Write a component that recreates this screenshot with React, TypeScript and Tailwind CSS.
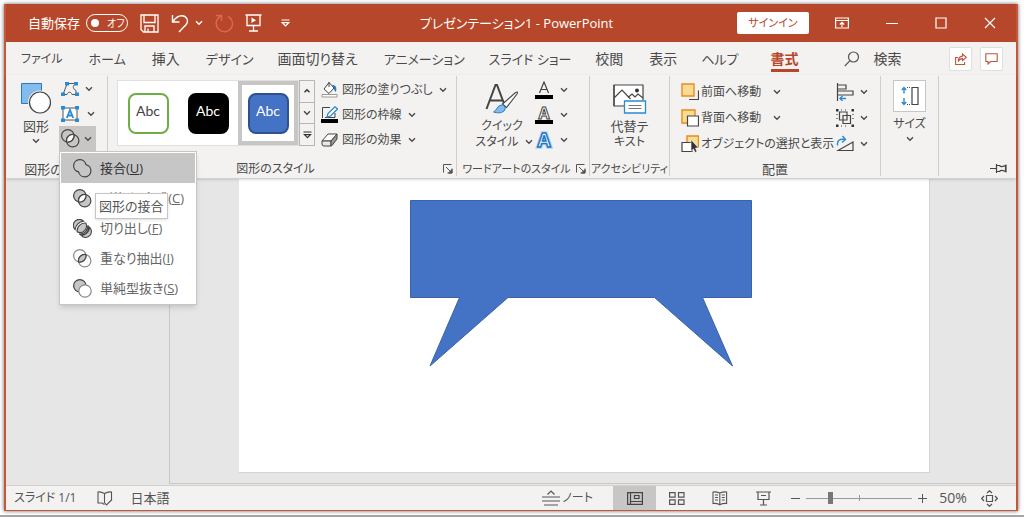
import React, { useState } from 'react';

const tabs = [
  { name: 'ファイル', style: 'pr-6.5 text-[12px]' },
  { name: 'ホーム', style: 'pr-6.5 text-[13px]' },
  { name: '挿入', style: 'pr-6.5 text-sm' },
  { name: 'デザイン', style: 'pr-6 text-[13px]' },
  { name: '画面切り替え', style: 'pr-6.5 text-sm' },
  { name: 'アニメーション', style: 'pr-6 text-[13px]' },
  { name: 'スライド ショー', style: 'pr-6 text-[13px]' },
  { name: '校閲', style: 'pr-6.5 text-sm' },
  { name: '表示', style: 'pr-6 text-sm' },
  { name: 'ヘルプ', style: 'pr-8 text-[13px]' },
];

const Chevron: React.FC = () => (
  <svg width="8" height="6" viewBox="0 0 8 6" fill="none" stroke="currentColor" strokeWidth="1.4" className="shrink-0">
    <path d="M1 1.3 4 4.3 7 1.3" />
  </svg>
);

const Launcher: React.FC = () => (
  <button aria-label="詳細" className="p-0">
    <svg width="10" height="10" viewBox="0 0 10 10" fill="none" stroke="#555" strokeWidth="1">
      <path d="M.5 8.5V.5h8M3 3l5.5 5.5M9 4.5V9H4.5" />
      <path d="M9 5.5V9H5.5z" fill="#555" />
    </svg>
  </button>
);

type GroupProps = {
  label?: string;
  labelSize?: string;
  launcher?: boolean;
  className?: string;
  children?: React.ReactNode;
};

const Group: React.FC<GroupProps> = ({ label, labelSize = 'text-[12px]', launcher, className = '', children }) => (
  <section className={`flex flex-col border-r border-[#d0cecc] ${className}`}>
    <div className="flex h-[85px] shrink-0 items-start">{children}</div>
    <div className={`flex h-4 items-center leading-4 ${labelSize}`}>
      <span className="flex-1 text-center whitespace-nowrap">{label}</span>
      {launcher && <Launcher />}
    </div>
  </section>
);

/* ---- combine-shape icons ---- */

const LENS = 'M12.9 5.6A6.2 6.2 0 0 1 5.6 12.9 6.2 6.2 0 0 1 12.9 5.6z';

const Circles: React.FC<{ kind: string }> = ({ kind }) => (
  <svg width="19" height="19" viewBox="0 0 19 19" fill="none" stroke="#444" strokeWidth="1.2" className="shrink-0">
    {kind === 'union' && <path d="M12.9 5.6A6.2 6.2 0 1 0 5.6 12.9 6.2 6.2 0 1 0 12.9 5.6z" />}
    {kind === 'combine' && (
      <>
        <circle cx="6.8" cy="6.8" r="6.2" fill="#c8c6c4" />
        <circle cx="11.7" cy="11.7" r="6.2" fill="#c8c6c4" />
        <path d={LENS} fill="#fff" />
      </>
    )}
    {kind === 'fragment' && (
      <g fill="#c8c6c4" strokeWidth="1.1">
        <path d="M10.6 2.1A5.8 5.8 0 1 0 2.1 10.600 9.500 9.500 0 0 1 10.600 2.100z" />
        <path d="M12.800 4.100A6.500 6.500 0 0 1 4.100 12.800 8 8 0 0 1 12.800 4.100z" />
        <path d="M14.900 6.200A6.500 6.500 0 0 1 6.200 14.900 8 8 0 0 0 14.900 6.200z" />
        <path d="M16.700 8.300A5.800 5.800 0 1 1 8.300 16.700 9.500 9.500 0 0 0 16.700 8.300z" />
      </g>
    )}
    {kind === 'intersect' && (
      <>
        <circle cx="6.8" cy="6.8" r="6.2" stroke="#888" />
        <circle cx="11.7" cy="11.7" r="6.2" stroke="#888" />
        <path d={LENS} fill="#c8c6c4" />
      </>
    )}
    {kind === 'subtract' && (
      <>
        <circle cx="6.8" cy="6.8" r="6.2" fill="#c8c6c4" />
        <circle cx="12" cy="12" r="6.2" fill="#fff" stroke="#888" />
      </>
    )}
  </svg>
);

const mergeItems = [
  { kind: 'union', text: '接合', k: 'U' },
  { kind: 'combine', text: '型抜き/合成', k: 'C' },
  { kind: 'fragment', text: '切り出し', k: 'F' },
  { kind: 'intersect', text: '重なり抽出', k: 'I' },
  { kind: 'subtract', text: '単純型抜き', k: 'S' },
];

const MergeMenu: React.FC = () => (
  <div className="absolute left-0 top-full z-20 w-[138px] border border-[#c8c6c4] bg-white p-px shadow-md">
    {mergeItems.map((m, i) => (
      <button
        key={m.kind}
        className={`flex h-[30px] w-full items-center gap-2 pl-3 text-[13px] leading-5 whitespace-nowrap ${i === 0 ? 'bg-[#c6c6c6] text-[#333]' : 'text-[#666]'}`}
      >
        <Circles kind={m.kind} />
        <span>{m.text}(<u>{m.k}</u>)</span>
      </button>
    ))}
    <div role="tooltip" className="absolute left-[35px] top-[41px] border border-[#c8c6c4] bg-white px-[3px] py-[3px] text-[13px] leading-[18px] whitespace-nowrap text-[#555] shadow">
      図形の接合
    </div>
  </div>
);

/* ---- title bar ---- */

const TitleBar: React.FC = () => {
  const [autoSave, setAutoSave] = useState(false);
  return (
    <header className="flex h-[38px] items-center bg-[#b7472a] pl-[22px] text-white">
      <label className="flex items-center gap-1.5 text-[13px] leading-5 whitespace-nowrap">
        自動保存
        <input type="checkbox" className="sr-only" checked={autoSave} onChange={e => setAutoSave(e.target.checked)} />
        <span className="flex h-[18px] w-[42px] items-center gap-2 rounded-full border border-white pl-1 text-[10px] leading-4">
          <span className="h-2 w-2 shrink-0 rounded-full bg-white" />
          オフ
        </span>
      </label>
      <button aria-label="保存" className="ml-3">
        <svg width="19" height="19" viewBox="0 0 19 19" fill="none" stroke="#fff" strokeWidth="1.3">
          <path d="M1 1h17v17H3.5L1 15.500zM4 1v7.500h11V1M5 18v-6h9v6M8 18v-3.500" />
        </svg>
      </button>
      <button aria-label="元に戻す" className="ml-3">
        <svg width="18" height="19" viewBox="0 0 18 19" fill="none" stroke="#fff" strokeWidth="1.4">
          <path d="M1.500 1v7h7M2 7.500C5 3 8 1.500 11 1.700c5 .3 7 5.500 4 9L8 18" />
        </svg>
      </button>
      <button aria-label="元に戻すの一覧" className="ml-1.5"><Chevron /></button>
      <button aria-label="やり直し" className="ml-3">
        <svg width="18" height="19" viewBox="0 0 18 19" fill="none" stroke="#e0654a" strokeWidth="1.5">
          <path d="M1 1.500h5.500V7M6.200 2A8 8 0 0 0 4 15.500a8 8 0 1 0 9-13" />
        </svg>
      </button>
      <button aria-label="スライドショー" className="ml-3">
        <svg width="17" height="18" viewBox="0 0 17 18" fill="none" stroke="#fff" strokeWidth="1.3">
          <path d="M.5 1h16M2 1v10.500h13V1M8.500 11.500V17M4 17h9" />
          <path d="M6.500 3.500v5.500L11 6.200z" fill="#fff" stroke="none" />
        </svg>
      </button>
      <button aria-label="カスタマイズ" className="ml-[19px]">
        <svg width="9" height="8" viewBox="0 0 9 8" fill="none" stroke="#fff" strokeWidth="1.2">
          <path d="M.5 1h8M1.300 3.600h6.400L4.500 6.800z" />
        </svg>
      </button>
      <h1 className="flex-1 pl-1.5 text-center text-[13px] leading-5 whitespace-nowrap">プレゼンテーション1 - PowerPoint</h1>
      <button className="h-[22px] w-[72px] rounded-xs bg-white text-[11px] leading-5 text-[#b7472a]">サインイン</button>
      <button aria-label="リボンの表示オプション" className="ml-[26px]">
        <svg width="14" height="12" viewBox="0 0 14 12" fill="none" stroke="#fff" strokeWidth="1.2">
          <path d="M.6 1h12.800v10H.6zM.6 3.500h12.800M7 10V5.500M4.800 7.500 7 5.300l2.200 2.200" />
        </svg>
      </button>
      <button aria-label="最小化" className="ml-[37px]">
        <svg width="12" height="12" viewBox="0 0 12 12" stroke="#fff"><path d="M0 6.500h12" /></svg>
      </button>
      <button aria-label="最大化" className="ml-[37px]">
        <svg width="12" height="12" viewBox="0 0 12 12" fill="none" stroke="#fff" strokeWidth="1.2"><path d="M1 1h10v10H1z" /></svg>
      </button>
      <button aria-label="閉じる" className="mr-5 ml-[37px]">
        <svg width="12" height="12" viewBox="0 0 12 12" stroke="#fff" strokeWidth="1.2"><path d="M1 1l10 10M11 1 1 11" /></svg>
      </button>
    </header>
  );
};

const TabRow: React.FC = () => (
  <nav className="flex h-[33px] items-center bg-[#f3f2f1] pl-[15px] text-sm leading-5 whitespace-nowrap text-[#4a4a4a]">
    {tabs.map(t => (
      <button key={t.name} className={`leading-5 ${t.style}`}>{t.name}</button>
    ))}
    <button className="border-b-3 border-[#b7472a] pt-1 font-bold text-[#b7472a]">書式</button>
    <button className="ml-[45px] flex items-center gap-3.5">
      <svg width="16" height="16" viewBox="0 0 16 16" fill="none" stroke="#555" strokeWidth="1.2">
        <circle cx="9.500" cy="6" r="5" />
        <path d="M6 9.600.8 15" />
      </svg>
      検索
    </button>
    <button aria-label="共有" className="ml-auto flex h-6 w-[23px] items-center justify-center rounded-xs border border-[#e1dfdd] bg-white">
      <svg width="12" height="12" viewBox="0 0 12 12" fill="none" stroke="#c0553a" strokeWidth="1.1">
        <path d="M3 4.500H.6v7h9V9M7.500 1l3.800 3.300-3.800 3.200V5.600C5.500 5.600 4 6.500 3.200 8.500c0-3 1.800-5.200 4.300-5.400z" />
      </svg>
    </button>
    <button aria-label="コメント" className="mr-[13px] ml-2 flex h-6 w-[23px] items-center justify-center rounded-xs border border-[#e1dfdd] bg-white">
      <svg width="13" height="12" viewBox="0 0 13 12" fill="none" stroke="#c0553a" strokeWidth="1.1">
        <path d="M.8.8h11.400v7.700H5.500L3 11V8.500H.8z" />
      </svg>
    </button>
  </nav>
);

/* ---- ribbon ---- */

const ShapesGroup: React.FC = () => (
  <Group label="図形の挿入" labelSize="text-[13px]" className="w-[102px]">
    <button className="ml-3.5 flex w-8 flex-col items-center text-[13px] leading-4">
      <svg width="32" height="32" viewBox="0 0 32 32" className="mt-1.5 mb-1">
        <path d="M1.500 1.500h20v20h-20z" fill="#83bbec" stroke="#2a7ac0" />
        <circle cx="20" cy="20.500" r="12" fill="#f3f2f1" />
        <circle cx="20" cy="20.500" r="10.500" fill="#fff" stroke="#444" strokeWidth="1.2" />
      </svg>
      図形
      <span className="mt-1"><Chevron /></span>
    </button>
    <div className="ml-[7px] flex flex-col">
      <button aria-label="図形の編集" className="flex h-[25px] w-[37px] items-center gap-1.5 pl-0.5">
        <svg width="18" height="16" viewBox="0 0 18 16" fill="none" stroke="#555">
          <path d="M2 13.500 6 3M6 2.500h8M14.500 3C11 5 12 8 15 9.500v4M2 13.500h4c1-3 4-3 5 0h4" />
          <g fill="#2a8ad4" stroke="none">
            <path d="M4 1h4v3.500H4zM13 1h4v3.500h-4zM0 11.500h4V15H0zM14 11.500h4V15h-4z" />
          </g>
        </svg>
        <Chevron />
      </button>
      <button aria-label="テキスト ボックス" className="flex h-[25px] w-[37px] items-center gap-2 pl-0.5">
        <svg width="18" height="16" viewBox="0 0 18 16" fill="none" stroke="#555">
          <path d="M2 2h14v12H2z" fill="#fff" />
          <path d="M0 0h4v3.500H0zM14 0h4v3.500h-4zM0 12.500h4V16H0zM14 12.500h4V16h-4z" fill="#2a8ad4" stroke="none" />
          <path d="M5.800 12 9 4l3.200 8M7 9.500h4" stroke="#2a8ad4" strokeWidth="1.8" />
        </svg>
        <Chevron />
      </button>
      <div className="relative">
        <button aria-label="図形の結合" className="flex h-[25px] w-[37px] items-center gap-1 bg-[#c8c6c4] pl-0.5">
          <svg width="19" height="19" viewBox="0 0 19 19" fill="none" stroke="#444" strokeWidth="1.2">
            <circle cx="6.800" cy="6.800" r="6.200" />
            <circle cx="11.700" cy="11.700" r="6.200" />
            <path d={LENS} fill="#fff" />
          </svg>
          <Chevron />
        </button>
        <MergeMenu />
      </div>
    </div>
  </Group>
);

const presets = [
  { id: 'outline', look: 'border-[#70ad47] bg-white text-[#444]', frame: 'border-transparent' },
  { id: 'black', look: 'border-black bg-black text-white', frame: 'border-transparent' },
  { id: 'blue', look: 'border-[#2f528f] bg-[#4472c4] text-white', frame: 'border-[#c8c6c4]' },
];

const fillItems = [
  {
    name: '図形の塗りつぶし',
    icon: (
      <>
        <path d="M8 1.500 3 8l5 4.500 5-5.500zM8 1v5" fill="#fff" stroke="#444" />
        <path d="M11 4c4 0 5 2 4 7-2-1-2-3-2-4z" fill="#2a7ac0" />
        <path d="M1 13.500h15v2.500H1z" fill="#fff" stroke="#999" />
      </>
    ),
  },
  {
    name: '図形の枠線',
    icon: (
      <>
        <path d="M9 1.500H1.500V12M4 11.500h10V7" fill="none" stroke="#444" />
        <path d="M6 11 7 7.500 14 .8l2.500 2.200L9.500 10z" fill="#fff" stroke="#2a8ad4" strokeWidth="1.3" />
        <path d="M0 13h17v4H0z" fill="#000" />
      </>
    ),
  },
  {
    name: '図形の効果',
    icon: (
      <>
        <path d="M1 10 7 3h9l-6 7z" fill="#fff" stroke="#444" />
        <path d="M1 10h9v5H3q-2 0-2-2z" fill="#e8e8e8" stroke="#444" />
        <path d="M10 10l6-7v5l-5 6.500-1 .5z" fill="#999" stroke="#444" />
      </>
    ),
  },
];

const StylesGroup: React.FC = () => (
  <Group label="図形のスタイル" launcher className="w-[349px] pr-[3px]">
    <div className="mt-1 ml-[9px] flex h-[66px] border border-[#e1dfdd] bg-white">
      {presets.map(p => (
        <button key={p.id} className={`flex h-16 w-[60px] items-center justify-center border-4 ${p.frame}`}>
          <span className={`flex h-[41px] w-[41px] shrink-0 justify-center rounded-lg border-2 pt-1.5 font-[Lato] text-sm leading-5 ${p.look}`}>
            Abc
          </span>
        </button>
      ))}
    </div>
    <div className="mt-1 flex h-[66px] w-4 shrink-0 flex-col divide-y divide-[#b8b6b4] border border-[#b8b6b4]">
      <button aria-label="上へ" className="flex flex-1 items-center justify-center">
        <svg width="8" height="6" viewBox="0 0 8 6" fill="none" stroke="#333" strokeWidth="1.4"><path d="M1.500 4.300 4 1.800l2.500 2.500" /></svg>
      </button>
      <button aria-label="下へ" className="flex flex-1 items-center justify-center"><Chevron /></button>
      <button aria-label="その他" className="flex flex-1 items-center justify-center">
        <svg width="9" height="8" viewBox="0 0 9 8" fill="none" stroke="#333" strokeWidth="1.2"><path d="M.5 1h8M1.500 3.600h6L4.500 6.600z" /></svg>
      </button>
    </div>
    <div className="ml-1.5 flex flex-col pt-px">
      {fillItems.map(f => (
        <button key={f.name} className="flex h-[25px] items-center gap-1 text-[12px] leading-5 whitespace-nowrap">
          <svg width="17" height="17" viewBox="0 0 17 17">{f.icon}</svg>
          {f.name}
          <span className="ml-0.5"><Chevron /></span>
        </button>
      ))}
    </div>
  </Group>
);

const WordArtGroup: React.FC = () => (
  <Group label="ワードアートのスタイル" labelSize="text-[11px]" launcher className="w-[133px] pr-[3px]">
    <button className="ml-[18px] flex w-[54px] flex-col items-center text-[12px] leading-4 whitespace-nowrap">
      <svg width="34" height="32" viewBox="0 0 34 32" fill="none" className="mt-1.5 mb-1">
        <path d="M1.500 27 10.500 3h1.500l7 18.500M5 18.500h13" stroke="#444" strokeWidth="2" />
        <path d="M17.500 22 30 11q3.500-2.500 2 1L21.500 25.500z" fill="#fff" stroke="#444" strokeWidth="1.100" />
        <path d="M8.500 30c3.500-1.500 3.500-6.500 8-7 3.500 0 5 3.500 2.500 6-3 2.500-7 2-10.500 1z" fill="#83bbec" stroke="#2a7ac0" />
      </svg>
      クイック
      <span className="flex items-center gap-1.5 pl-1">スタイル <Chevron /></span>
    </button>
    <div className="ml-1.5 flex flex-col pt-px">
      <button aria-label="文字の塗りつぶし" className="flex h-[25px] items-center gap-[7px]">
        <svg width="18" height="18" viewBox="0 0 18 18" fill="none">
          <path d="M4.500 12 9 1l4.500 11M6 8.500h6" stroke="#444" strokeWidth="1.2" />
          <path d="M0 14h18v4H0z" fill="#000" />
        </svg>
        <Chevron />
      </button>
      <button aria-label="文字の輪郭" className="flex h-[25px] items-center gap-[7px]">
        <svg width="18" height="18" viewBox="0 0 18 18">
          <text x="9" y="12.500" textAnchor="middle" fontSize="16" fontWeight="700" fontFamily="Open Sans" fill="#fff" stroke="#444">A</text>
          <path d="M0 14h18v4H0z" fill="#000" />
        </svg>
        <Chevron />
      </button>
      <button aria-label="文字の効果" className="flex h-[25px] items-center gap-[7px]">
        <svg width="18" height="18" viewBox="0 0 18 18" fontSize="19" fontWeight="700" fontFamily="Open Sans" textAnchor="middle">
          <text x="9" y="16" fill="none" stroke="#b5d6f3" strokeWidth="3.500">A</text>
          <text x="9" y="16" fill="#fff" stroke="#1f77c4" strokeWidth="1.500">A</text>
        </svg>
        <Chevron />
      </button>
    </div>
  </Group>
);

const AltTextGroup: React.FC = () => (
  <Group label="アクセシビリティ" labelSize="text-[11px]" className="w-[80px]">
    <button className="mx-auto flex flex-col items-center text-[13px] leading-4">
      <svg width="34" height="32" viewBox="0 0 34 32" fill="none" className="mt-1.5 mb-1">
        <path d="M1 24V3h29v15" fill="#fff" stroke="#444" strokeWidth="1.2" />
        <path d="M1 3v21h10M1 16l8-8 8.500 9M15 15.500l4-3.500 3 3 3-3 5 4" stroke="#444" strokeWidth="1.2" />
        <circle cx="24" cy="8.500" r="2" fill="#333" />
        <path d="M11.500 19h21v12h-21z" fill="#fff" stroke="#2a8ad4" strokeWidth="1.3" />
        <path d="M15.500 23.500h13M15.500 26.500h13" stroke="#777" />
      </svg>
      代替テ
      <span className="text-[12px]">キスト</span>
    </button>
  </Group>
);

const arrangeItems = [
  {
    name: '前面へ移動',
    menu: true,
    icon: (
      <>
        <path d="M12 16.500h5.500V7.500M8 16.500h9" fill="none" stroke="#444" strokeWidth="1.2" />
        <path d="M1 1h12v12H1z" fill="#f9dc93" stroke="#ea8a1f" strokeWidth="1.4" />
      </>
    ),
  },
  {
    name: '背面へ移動',
    menu: true,
    icon: (
      <>
        <path d="M1 1h13v13H1z" fill="#f9dc93" stroke="#ea8a1f" strokeWidth="1.4" />
        <path d="M6.500 7h11v10h-11z" fill="#fff" stroke="#444" strokeWidth="1.2" />
      </>
    ),
  },
  {
    name: 'オブジェクトの選択と表示',
    menu: false,
    icon: (
      <>
        <path d="M6 1h11.500v11H6z" fill="#f9dc93" stroke="#ea8a1f" strokeWidth="1.4" />
        <path d="M1 7.500h10v9H1z" fill="#fff" stroke="#444" strokeWidth="1.2" />
        <path d="M10 4.500v11.500l2.500-2 1.500 3.500 2-1-1.500-3.500h3z" fill="#333" stroke="#fff" strokeWidth=".6" />
      </>
    ),
  },
];

const ArrangeGroup: React.FC = () => (
  <Group label="配置" labelSize="text-[13px]" className="w-[211px]">
    <div className="flex flex-col pt-[3px] pl-[11px]">
      {arrangeItems.map(a => (
        <button key={a.name} className="flex h-[26px] items-center gap-0.5 text-[12px] leading-5 whitespace-nowrap">
          <svg width="18" height="18" viewBox="0 0 18 18" className="shrink-0">{a.icon}</svg>
          {a.name}
          {a.menu && <span className="ml-2.5"><Chevron /></span>}
        </button>
      ))}
    </div>
    <div className="flex flex-col pt-[3px] pl-0.5">
      <button aria-label="配置" className="flex h-[26px] items-center gap-1.5">
        <svg width="18" height="18" viewBox="0 0 18 18" fill="none" stroke="#444" strokeWidth="1.2">
          <path d="M1.500 0v18M2 2h8v4H2M2 8h15v4H2" />
          <path d="M10 15.500H4M6.500 13 4 15.500 6.500 18" stroke="#2a8ad4" strokeWidth="1.4" />
        </svg>
        <Chevron />
      </button>
      <button aria-label="グループ化" className="flex h-[26px] items-center gap-1.5">
        <svg width="18" height="18" viewBox="0 0 18 18" fill="none" stroke="#444" strokeWidth="1.2">
          <path d="M3.500 3h7.500v8H3.500zM7 6.500h7.500v8H7z" />
          <path d="M0 0h2.500v2.500H0zM15.500 0H18v2.500h-2.500zM0 15.500h2.500V18H0zM15.500 15.500H18V18h-2.500z" fill="#333" stroke="none" />
          <path d="M5 1h8M5 17h8M1 5v8M17 5v8" strokeDasharray="1 3" />
        </svg>
        <Chevron />
      </button>
      <button aria-label="回転" className="flex h-[26px] items-center gap-1.5">
        <svg width="18" height="18" viewBox="0 0 18 18" fill="none" stroke="#444" strokeWidth="1.2">
          <path d="M2 15.500h15v-8.500z" />
          <path d="M1.500 10.500C1 5.500 3.500 3.500 9 4.500M6.500 1l3 3.500-3.500 3" stroke="#2a8ad4" strokeWidth="1.4" />
        </svg>
        <Chevron />
      </button>
    </div>
  </Group>
);

const SizeGroup: React.FC = () => (
  <Group className="w-[58px]">
    <button className="mx-auto flex flex-col items-center text-[12px] leading-4">
      <span className="mt-1 mb-1 flex h-8 w-[33px] items-center justify-center border border-[#c8c6c4] bg-white">
        <svg width="18" height="20" viewBox="0 0 18 20" fill="none">
          <path d="M3 2v5.500M.8 4 3 1.500 5.200 4M3 12v6M.8 16 3 18.500 5.200 16" stroke="#2a8ad4" strokeWidth="1.4" />
          <path d="M11 1.500h6v17h-6z" stroke="#444" strokeWidth="1.2" />
          <path d="M6 1.500h4M6 18.500h4" stroke="#444" strokeDasharray="1 1" />
        </svg>
      </span>
      サイズ
      <span className="mt-1"><Chevron /></span>
    </button>
  </Group>
);

const Ribbon: React.FC = () => (
  <div className="relative z-10 flex h-[104px] border-b border-[#d2d0ce] bg-[#f3f2f1] pt-px pb-0.5 text-[#4a4a4a] shadow-sm">
    <ShapesGroup />
    <StylesGroup />
    <WordArtGroup />
    <AltTextGroup />
    <ArrangeGroup />
    <SizeGroup />
    <button aria-label="リボンの固定" className="mt-auto mr-2 mb-0.5 ml-auto">
      <svg width="18" height="11" viewBox="0 0 18 11" fill="none" stroke="#444" strokeWidth="1.2">
        <path d="M0 5.500h6.500M6.500 1v9M6.500 2.500h3q1 1.200 2 1.200t4-1.200v6q-3-1.200-4-1.200t-2 1.200h-3M16 1.500v8" />
      </svg>
    </button>
  </div>
);

const StatusBar: React.FC = () => {
  const [zoom, setZoom] = useState(22);
  return (
    <footer className="flex h-6 items-center bg-[#f3f2f1] pl-2 text-[13px] leading-5 whitespace-nowrap text-[#555]">
      <span className="text-[12px]">スライド 1/1</span>
      <button aria-label="校正" className="ml-5">
        <svg width="16" height="15" viewBox="0 0 16 15" fill="none" stroke="#555" strokeWidth="1.1">
          <path d="M7.500 2.500V12M7.500 2.500Q4 .5 1 1v11h4l2.500 1.500M7.500 2.500Q11 .5 14.500 1v7.500M7 11l2.500 3L15 8.500" />
        </svg>
      </button>
      <button className="ml-[18px]">日本語</button>
      <button className="ml-auto flex items-center gap-0.5 text-[12px]">
        <svg width="18" height="16" viewBox="0 0 18 16" fill="none" stroke="#555" strokeWidth="1.2">
          <path d="M5.500 4.500 9 1l3.500 3.500M0 7h18M0 11h18M2 15h14" />
        </svg>
        ノート
      </button>
      <button aria-label="標準" className="ml-5 flex h-6 w-[43px] items-center justify-center bg-[#c8c6c4]">
        <svg width="16" height="13" viewBox="0 0 16 13" fill="none" stroke="#444" strokeWidth="1.2">
          <path d="M.6.6h14.800v11.800H.6zM3.500.6v11.800M3.500 9.500h12M7.500 3.500h4.500v3H7.500z" />
        </svg>
      </button>
      <button aria-label="スライド一覧" className="ml-[13px]">
        <svg width="16" height="13" viewBox="0 0 16 13" fill="none" stroke="#555" strokeWidth="1.2">
          <path d="M.6.6h5.500v4.500H.6zM9.500.6H15v4.500H9.500zM.6 7.900h5.500v4.500H.6zM9.500 7.900H15v4.500H9.500z" />
        </svg>
      </button>
      <button aria-label="閲覧表示" className="ml-[27px]">
        <svg width="16" height="15" viewBox="0 0 16 15" fill="none" stroke="#555" strokeWidth="1.1">
          <path d="M7.800 2Q4 .5 1 1v11.500q3.500-.5 6.800 1.300 3.300-1.800 6.800-1.300V1Q11.500.5 7.800 2zM7.800 2v12M3 4h3M3 6.500h3M3 9h3M9.800 4h3M9.800 6.500h3M9.800 9h3" />
        </svg>
      </button>
      <button aria-label="スライド ショー" className="ml-7">
        <svg width="15" height="15" viewBox="0 0 15 15" fill="none" stroke="#555" strokeWidth="1.2">
          <path d="M0 1h15M2 1v7.500h11V1M5 4.500h5M7.500 8.500V14M4 14h7" />
        </svg>
      </button>
      <button aria-label="縮小" className="ml-5">
        <svg width="9" height="9" viewBox="0 0 9 9" stroke="#555"><path d="M0 4.500h9" /></svg>
      </button>
      <span className="relative ml-1.5 flex h-4 w-[106px] items-center">
        <span className="absolute left-1/2 top-[5px] h-1.5 w-px bg-[#999]" />
        <input
          type="range"
          aria-label="ズーム"
          value={zoom}
          onChange={e => setZoom(Number(e.target.value))}
          className="relative h-px w-full appearance-none bg-[#999] [&::-webkit-slider-thumb]:h-3 [&::-webkit-slider-thumb]:w-[5px] [&::-webkit-slider-thumb]:appearance-none [&::-webkit-slider-thumb]:bg-[#777]"
        />
      </span>
      <button aria-label="拡大" className="ml-1.5">
        <svg width="9" height="9" viewBox="0 0 9 9" stroke="#555"><path d="M0 4.500h9M4.500 0v9" /></svg>
      </button>
      <button className="ml-2.5 w-8 text-sm leading-5">50%</button>
      <button aria-label="ウィンドウに合わせる" className="mr-[18px] ml-3">
        <svg width="17" height="17" viewBox="0 0 17 17" fill="none" stroke="#555" strokeWidth="1.2">
          <path d="M5.500 5.500h6v6h-6zM6 3l2.500-2.300L11 3M6 14l2.500 2.300L11 14M3 6 .7 8.500 3 11M14 6l2.300 2.500L14 11" />
        </svg>
      </button>
    </footer>
  );
};

export default function App() {
  return (
    <div className="flex min-h-screen flex-col border-b-2 border-[#a6a6a6] bg-white pt-1 pr-1.5 pb-1 pl-1 font-['Open_Sans','Noto_Sans_CJK_JP',sans-serif] [font-feature-settings:'palt']">
      <div className="flex flex-1 flex-col border-x-2 border-b border-[#c5573c] shadow-[0_0_4px_rgba(0,0,0,0.6)]">
        <TitleBar />
        <TabRow />
        <Ribbon />
        <main className="flex flex-1 bg-[#e6e6e6]">
          <aside className="w-[164px] border-r border-[#c8c8c8]" />
          <div className="flex flex-1 flex-col border-b border-[#c8c8c8] pr-[86px] pb-2.5 pl-[69px]">
            <div className="flex-1 border-r border-b border-[#d4d4d4] bg-white pt-[21px] pl-[171px]">
              <svg width="343" height="167" viewBox="0 0 343 167">
                <path d="M.5.5h341v97h-49l30 68.500-78-68.500H98L20 166l29.500-68.500H.5z" fill="#4472c4" stroke="#3a62a8" />
              </svg>
            </div>
          </div>
        </main>
        <div className="h-0.5 border-b border-[#d0d0d0] bg-[#e6e6e6]" />
        <StatusBar />
      </div>
    </div>
  );
}
